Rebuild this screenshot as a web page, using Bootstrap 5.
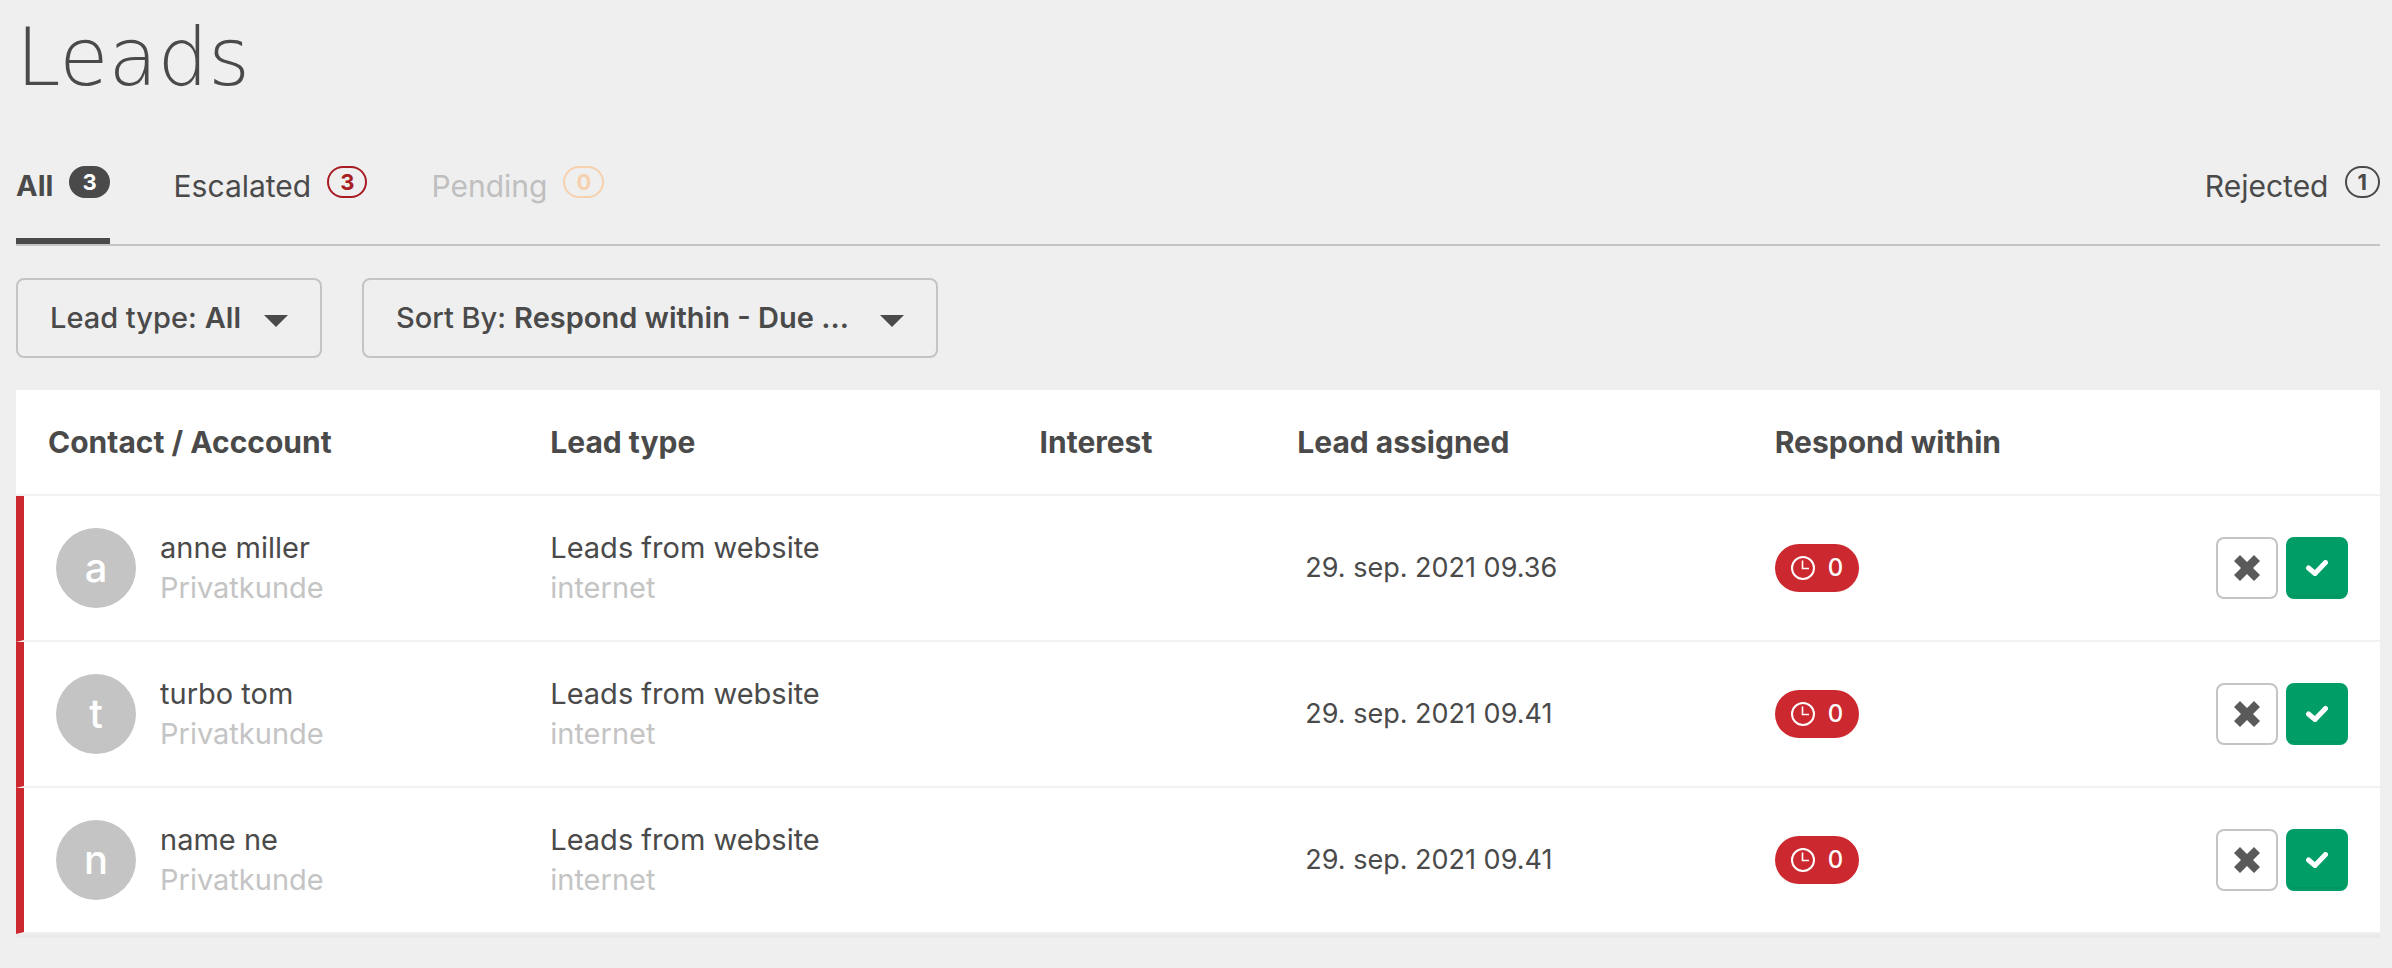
<!DOCTYPE html>
<html lang="en">
<head>
<meta charset="utf-8">
<meta name="viewport" content="width=device-width, initial-scale=1">
<title>Leads</title>
<link href="https://cdn.jsdelivr.net/npm/bootstrap@5.3.0/dist/css/bootstrap.min.css" rel="stylesheet">
<style>
  :root { --ink: #4a4a4a; --line: #c4c4c4; --soft: #f2f2f2; --alert: #cc282f; --go: #009e66; }
  body { background: #efefef; color: var(--ink); font-family: Inter, "Liberation Sans", sans-serif; font-size: 29px; line-height: 40px; }
  .page { padding: 10px 12px 32px 16px; }
  .page-title { font-family: "DejaVu Sans", sans-serif; font-size: 80px; font-weight: 200; line-height: 96px; margin-bottom: 60px; }

  .tabs { border-bottom: 2px solid var(--line); gap: 64px; margin-bottom: 32px; }
  .tabs .nav-link { display: flex; align-items: flex-start; gap: 16px; padding: 0 0 32px; color: var(--ink); font-size: 30px; border-bottom: 6px solid transparent; }
  .tabs .nav-link.active { font-size: 29px; font-weight: 700; border-color: var(--ink); }
  .tabs .nav-link.disabled { color: #bfbfbf; }
  .tally { display: inline-flex; align-items: center; height: 32px; padding: 0 11px; border: 2px solid currentColor; border-radius: 16px; font-size: 22px; font-weight: 700; line-height: 28px; }
  .tally-solid { background: var(--ink); border-color: var(--ink); color: #fff; }
  .tally-alert { color: #a81c24; }
  .tally-wait { color: #f7d0ad; }

  .filters { gap: 40px; margin-bottom: 32px; }
  .filter { display: flex; align-items: center; height: 80px; padding-left: 32px; border: 2px solid var(--line); border-radius: 8px; font-weight: 500; }
  .filter label { white-space: pre; }
  .filter .form-select { flex: 1 1 auto; width: auto; height: 76px; padding: 0 76px 0 8px; border: 0; color: var(--ink); font-size: 29px; font-weight: 600; line-height: 40px;
    background: transparent url("data:image/svg+xml,%3Csvg xmlns='http://www.w3.org/2000/svg' viewBox='0 0 24 12'%3E%3Cpath fill='%234a4a4a' d='M0 0h24L12 12z'/%3E%3C/svg%3E") no-repeat right 32px top 35px / 24px 12px; }
  .filter-type { min-width: 306px; }
  .filter-sort { min-width: 576px; }

  .leads { table-layout: fixed; width: 100%; border-collapse: separate; border-spacing: 0; background: #fff; box-shadow: 0 4px 0 #eaeaea; }
  .leads th, .leads td { padding: 0; border: 0 solid var(--soft); border-bottom-width: 2px; vertical-align: middle; }
  .leads th { height: 106px; font-size: 30px; font-weight: 700; }
  .leads td { height: 146px; }
  .leads th:first-child, .leads td:first-child { padding-left: 32px; }
  .leads td:first-child { border-left: 8px solid var(--alert); }
  .leads td:last-child { padding-right: 32px; }
  .leads tr:last-child td { border-bottom-color: #f0f0f0; }
  .col-contact { width: 22.6%; } .col-type { width: 20.7%; } .col-interest { width: 10.9%; } .col-assigned { width: 20.2%; }
  .faint { color: var(--line); }
  .leads .when { font-size: 27px; padding-left: 8px; }

  .avatar { width: 80px; height: 80px; border-radius: 50%; background: var(--line); color: #fff; font-size: 40px; font-weight: 500; }
  .due { display: inline-flex; align-items: center; gap: 13px; height: 48px; padding: 0 16px; border-radius: 24px; background: var(--alert); color: #fff; font-size: 24px; font-weight: 500; vertical-align: middle; }
  .act { display: flex; align-items: center; justify-content: center; width: 62px; height: 62px; padding: 0; border: 2px solid var(--line); border-radius: 8px; background: #fff; color: #5a5a5a; }
  .act-accept { background: var(--go); border-color: var(--go); color: #fff; box-shadow: inset 0 -2px 0 #00965f; }
</style>
</head>
<body>
<svg class="d-none" aria-hidden="true">
  <symbol id="clock" viewBox="0 0 24 24"><g fill="none" stroke="currentColor"><circle cx="12" cy="12" r="11" stroke-width="2"/><path d="M11.500 4.500v8H18" stroke-width="1.600"/></g></symbol>
  <symbol id="cross" viewBox="0 0 26 26"><path fill="currentColor" d="M6 0 13 7 20 0 26 6 19 13 26 20 20 26 13 19 6 26 0 20 7 13 0 6z"/></symbol>
  <symbol id="tick" viewBox="0 0 22 16"><path d="M2.500 8 9 13.500 19.500 2.500" fill="none" stroke="currentColor" stroke-width="5" stroke-linecap="round"/></symbol>
</svg>

<main class="page">
  <h1 class="page-title mt-0">Leads</h1>

  <nav class="nav tabs flex-nowrap" aria-label="Lead lists">
    <a class="nav-link active" href="#" aria-current="page">All <span class="tally tally-solid">3</span></a>
    <a class="nav-link" href="#">Escalated <span class="tally tally-alert">3</span></a>
    <a class="nav-link disabled" href="#" aria-disabled="true">Pending <span class="tally tally-wait">0</span></a>
    <a class="nav-link ms-auto" href="#">Rejected <span class="tally">1</span></a>
  </nav>

  <form class="filters d-flex flex-wrap">
    <div class="filter filter-type">
      <label for="leadType">Lead type:</label>
      <select class="form-select" id="leadType"><option>All</option></select>
    </div>
    <div class="filter filter-sort">
      <label for="sortBy">Sort By:</label>
      <select class="form-select" id="sortBy"><option>Respond within - Due ...</option></select>
    </div>
  </form>

  <table class="leads">
    <colgroup><col class="col-contact"><col class="col-type"><col class="col-interest"><col class="col-assigned"><col><col></colgroup>
    <thead>
      <tr><th scope="col">Contact / Acccount</th><th scope="col">Lead type</th><th scope="col">Interest</th><th scope="col">Lead assigned</th><th scope="col">Respond within</th><th></th></tr>
    </thead>
    <tbody>
      <tr>
        <td><div class="d-flex align-items-center gap-4"><span class="avatar d-flex align-items-center justify-content-center">a</span><div><div>anne miller</div><div class="faint">Privatkunde</div></div></div></td>
        <td><div>Leads from website</div><div class="faint">internet</div></td>
        <td></td>
        <td class="when">29. sep. 2021 09.36</td>
        <td><span class="due"><svg width="24" height="24"><use href="#clock"/></svg>0</span></td>
        <td><div class="d-flex justify-content-end gap-2"><button class="act" type="button" aria-label="Reject"><svg width="26" height="26"><use href="#cross"/></svg></button><button class="act act-accept" type="button" aria-label="Accept"><svg width="22" height="16"><use href="#tick"/></svg></button></div></td>
      </tr>
      <tr>
        <td><div class="d-flex align-items-center gap-4"><span class="avatar d-flex align-items-center justify-content-center">t</span><div><div>turbo tom</div><div class="faint">Privatkunde</div></div></div></td>
        <td><div>Leads from website</div><div class="faint">internet</div></td>
        <td></td>
        <td class="when">29. sep. 2021 09.41</td>
        <td><span class="due"><svg width="24" height="24"><use href="#clock"/></svg>0</span></td>
        <td><div class="d-flex justify-content-end gap-2"><button class="act" type="button" aria-label="Reject"><svg width="26" height="26"><use href="#cross"/></svg></button><button class="act act-accept" type="button" aria-label="Accept"><svg width="22" height="16"><use href="#tick"/></svg></button></div></td>
      </tr>
      <tr>
        <td><div class="d-flex align-items-center gap-4"><span class="avatar d-flex align-items-center justify-content-center">n</span><div><div>name ne</div><div class="faint">Privatkunde</div></div></div></td>
        <td><div>Leads from website</div><div class="faint">internet</div></td>
        <td></td>
        <td class="when">29. sep. 2021 09.41</td>
        <td><span class="due"><svg width="24" height="24"><use href="#clock"/></svg>0</span></td>
        <td><div class="d-flex justify-content-end gap-2"><button class="act" type="button" aria-label="Reject"><svg width="26" height="26"><use href="#cross"/></svg></button><button class="act act-accept" type="button" aria-label="Accept"><svg width="22" height="16"><use href="#tick"/></svg></button></div></td>
      </tr>
    </tbody>
  </table>
</main>
<script src="https://cdn.jsdelivr.net/npm/bootstrap@5.3.0/dist/js/bootstrap.bundle.min.js"></script>
</body>
</html>
